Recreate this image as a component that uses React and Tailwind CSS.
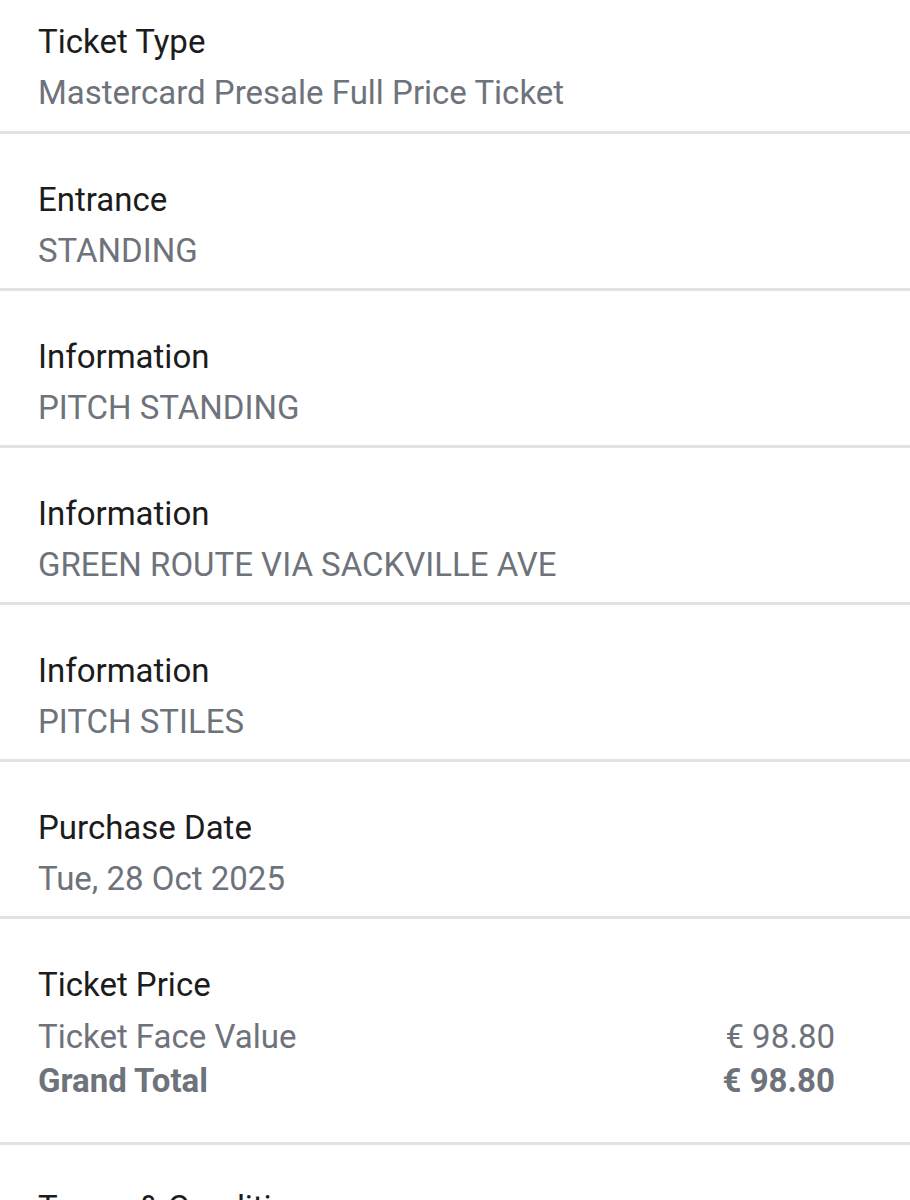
import React from 'react';

const rows = [
  { label: 'Ticket Type', value: 'Mastercard Presale Full Price Ticket' },
  { label: 'Entrance', value: 'STANDING' },
  { label: 'Information', value: 'PITCH STANDING' },
  { label: 'Information', value: 'GREEN ROUTE VIA SACKVILLE AVE' },
  { label: 'Information', value: 'PITCH STILES' },
  { label: 'Purchase Date', value: 'Tue, 28 Oct 2025' },
];

const App = () => {
  return (
    <div className="w-[910px] h-[1200px] overflow-hidden bg-white" style={{ fontFamily: 'Roboto, "Liberation Sans", sans-serif' }}>
      {rows.map((row, i) => (
        <div
          key={i}
          className={`px-[38px] border-b-[3px] border-[#e2e2e2] ${i === 0 ? 'pt-[21px] pb-[16px]' : 'pt-[45px] pb-[15px]'}`}
        >
          <div className="text-[33px] leading-[42px] text-[#1c1c1c]">{row.label}</div>
          <div className="mt-[8px] text-[33px] leading-[44px] text-[#6e737b]">{row.value}</div>
        </div>
      ))}

      {/* Price breakdown */}
      <div className="pl-[38px] pr-[75px] pt-[45px] pb-[39px] border-b-[3px] border-[#e2e2e2]">
        <div className="text-[33px] leading-[42px] text-[#1c1c1c]">Ticket Price</div>
        <div className="mt-[9px] flex justify-between text-[33px] leading-[44px] text-[#6e737b]">
          <span>Ticket Face Value</span>
          <span>€ 98.80</span>
        </div>
        <div className="flex justify-between text-[33px] leading-[44px] font-bold text-[#6e737b]">
          <span>Grand Total</span>
          <span>€ 98.80</span>
        </div>
      </div>

      <div className="px-[38px] pt-[42px]">
        <div className="text-[33px] leading-[42px] text-[#1c1c1c]">Terms &amp; Conditions</div>
      </div>
    </div>
  );
};

export default App;
